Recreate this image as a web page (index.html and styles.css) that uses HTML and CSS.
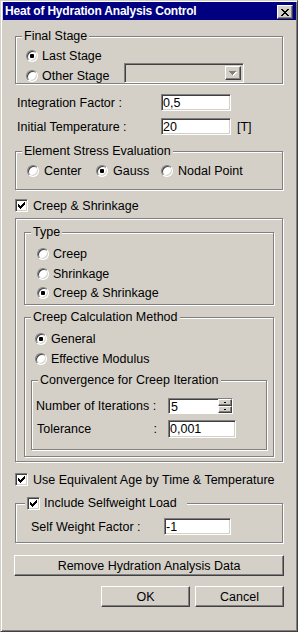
FILE: index.html
```html
<!doctype html>
<html lang="en">
 <head>
  <meta charset="UTF-8">
  <title>Heat of Hydration Analysis Control</title>
  <link rel="stylesheet" href="styles.css">
 </head>
 <body>

	<div id="dlg">
		<!-- 타이틀바 -->
		<div class="caption">
			<span class="cap_text">Heat of Hydration Analysis Control</span>
			<span class="cap_close">
				<svg width="8" height="7" viewBox="0 0 8 7"><path d="M0 0h2v1H0zM6 0h2v1H6zM1 1h2v1H1zM5 1h2v1H5zM2 2h4v1H2zM3 3h2v1H3zM2 4h4v1H2zM1 5h2v1H1zM5 5h2v1H5zM0 6h2v1H0zM6 6h2v1H6z"/></svg>
			</span>
		</div>

		<div class="client">

			<!-- Final Stage -->
			<fieldset class="grp f_final">
				<legend>Final Stage</legend>
				<div class="gb g_final">
					<div class="opt r_last"><span class="radio on"></span><span>Last Stage</span></div>
					<div class="r_other">
						<div class="opt o_other"><span class="radio"></span><span>Other Stage</span></div>
						<div class="combo">
							<span class="combo_btn">
								<svg width="8" height="5" viewBox="0 0 8 5"><path fill="#fff" d="M1 1h7v1H1zM2 2h5v1H2zM3 3h3v1H3zM4 4h1v1H4z"/><path fill="#808080" d="M0 0h7v1H0zM1 1h5v1H1zM2 2h3v1H2zM3 3h1v1H3z"/></svg>
							</span>
						</div>
					</div>
				</div>
			</fieldset>

			<!-- 입력값 -->
			<div class="field f_int">
				<span class="fld_lbl">Integration Factor :</span>
				<input class="edit" type="text" value="0,5">
			</div>
			<div class="field f_temp">
				<span class="fld_lbl">Initial Temperature :</span>
				<input class="edit" type="text" value="20">
				<span class="unit">[T]</span>
			</div>

			<!-- Element Stress Evaluation -->
			<fieldset class="grp f_stress">
				<legend>Element Stress Evaluation</legend>
				<div class="gb g_stress">
					<div class="opt o_center"><span class="radio"></span><span>Center</span></div>
					<div class="opt o_gauss"><span class="radio on"></span><span>Gauss</span></div>
					<div class="opt"><span class="radio"></span><span>Nodal Point</span></div>
				</div>
			</fieldset>

			<div class="opt chk_row c_creep">
				<span class="check"><svg width="7" height="7" viewBox="0 0 7 7"><path d="M0 2h1v3H0zM1 3h1v3H1zM2 4h1v3H2zM3 3h1v3H3zM4 2h1v3H4zM5 1h1v3H5zM6 0h1v3H6z"/></svg></span>
				<span>Creep &amp; Shrinkage</span>
			</div>

			<!-- Creep 박스 -->
			<div class="box">
				<fieldset class="grp">
					<legend>Type</legend>
					<div class="gb g_type">
						<div class="opt t1"><span class="radio"></span><span>Creep</span></div>
						<div class="opt t2"><span class="radio"></span><span>Shrinkage</span></div>
						<div class="opt t3"><span class="radio on"></span><span>Creep &amp; Shrinkage</span></div>
					</div>
				</fieldset>

				<fieldset class="grp f_calc">
					<legend>Creep Calculation Method</legend>
					<div class="gb g_calc">
						<div class="opt m1"><span class="radio on"></span><span>General</span></div>
						<div class="opt m2"><span class="radio"></span><span>Effective Modulus</span></div>

						<fieldset class="grp f_conv">
							<legend>Convergence for Creep Iteration</legend>
							<div class="gb g_conv">
								<div class="field f_iter">
									<span class="fld_lbl">Number of Iterations :</span>
									<div class="spin">
										<input class="spin_edit" type="text" value="5">
										<span class="spin_btns"><span class="sb"></span><span class="sb"></span></span>
									</div>
								</div>
								<div class="field f_tol">
									<span class="fld_lbl tol_lbl"><span>Tolerance</span><span>:</span></span>
									<input class="edit" type="text" value="0,001">
								</div>
							</div>
						</fieldset>
					</div>
				</fieldset>
			</div>

			<div class="opt chk_row c_age">
				<span class="check"><svg width="7" height="7" viewBox="0 0 7 7"><path d="M0 2h1v3H0zM1 3h1v3H1zM2 4h1v3H2zM3 3h1v3H3zM4 2h1v3H4zM5 1h1v3H5zM6 0h1v3H6z"/></svg></span>
				<span>Use Equivalent Age by Time &amp; Temperature</span>
			</div>

			<!-- Selfweight -->
			<fieldset class="grp f_self">
				<legend class="lg_check">
					<span class="check"><svg width="7" height="7" viewBox="0 0 7 7"><path d="M0 2h1v3H0zM1 3h1v3H1zM2 4h1v3H2zM3 3h1v3H3zM4 2h1v3H4zM5 1h1v3H5zM6 0h1v3H6z"/></svg></span>
					<span>Include Selfweight Load</span>
				</legend>
				<div class="gb g_self">
					<div class="field f_selfw">
						<span class="fld_lbl">Self Weight Factor :</span>
						<input class="edit" type="text" value="-1">
					</div>
				</div>
			</fieldset>

			<button class="btn b_remove" type="button">Remove Hydration Analysis Data</button>

			<div class="b_row">
				<button class="btn b_ok" type="button">OK</button>
				<button class="btn b_ok" type="button">Cancel</button>
			</div>
		</div>
	</div>

 </body>
</html>
```

FILE: styles.css
```css
/* 기본 */
* {
box-sizing: border-box;
}

html,body {
margin: 0;
background: #d4d0c8;
}

body {
font-family: "Liberation Sans", Arial, sans-serif;
font-size: 12.5px;
line-height: 14px;
color: #000;
}

/* 창 전체 */
#dlg {
width: 298px;
height: 632px;
padding: 1px;
background: #d4d0c8;
border: solid 1px;
border-color: #d4d0c8 #404040 #404040 #d4d0c8;
box-shadow: inset 1px 1px 0 #fff, inset -1px -1px 0 #808080;
}

/* 타이틀바 */
.caption {
height: 18px;
margin-left: 1px;
padding: 0 3px 0 2px;
display: flex;
align-items: center;
justify-content: space-between;
background: #000080;
color: #fff;
font-size: 12px;
font-weight: bold;
letter-spacing: -0.2px;
}

.cap_close {
width: 16px;
height: 14px;
margin-top: 2px;
display: flex;
align-items: center;
justify-content: center;
background: #d4d0c8;
border: solid 1px;
border-color: #fff #404040 #404040 #fff;
box-shadow: inset -1px -1px 0 #808080;
}

/* 본문 */
.client {
display: flex;
flex-direction: column;
padding: 0 13px;
}

/* 그룹박스 (안쪽 여백은 .gb 에서) */
.grp {
min-width: 0;
margin: 0;
padding: 0;
border: solid 1px #808080;
box-shadow: inset 1px 1px 0 #fff, 1px 1px 0 #fff;
}

.grp legend {
height: 13px;
line-height: 13px;
margin-left: 6px;
padding: 0 2px;
background: #d4d0c8;
}

.box {
margin-top: 6px;
padding: 7px 8px 4px 8px;
border: solid 1px #808080;
box-shadow: inset 1px 1px 0 #fff, 1px 1px 0 #fff;
}

/* 라디오, 체크 */
.opt {
height: 14px;
display: flex;
align-items: center;
gap: 4px;
white-space: nowrap;
}

.radio {
width: 12px;
height: 12px;
flex: none;
display: flex;
align-items: center;
justify-content: center;
border-radius: 50%;
background: #fff;
border: solid 1px;
border-color: #808080 #fff #fff #808080;
box-shadow: inset 1px 1px 0 #404040, inset -1px -1px 0 #d4d0c8;
}

.radio.on::after {
content: "";
width: 4px;
height: 4px;
border-radius: 1px;
background: #000;
}

.check {
width: 13px;
height: 13px;
flex: none;
display: flex;
align-items: center;
justify-content: center;
background: #fff;
border: solid 1px;
border-color: #808080 #fff #fff #808080;
box-shadow: inset 1px 1px 0 #404040, inset -1px -1px 0 #d4d0c8;
}

.chk_row {
height: 13px;
gap: 5px;
}

/* Final Stage */
.f_final {
margin-top: 10px;
}

.g_final {
padding-left: 10px;
}

.r_last {
margin-top: 6px;
}

.r_other {
height: 20px;
display: flex;
align-items: flex-end;
}

.o_other {
width: 98px;
}

.combo {
width: 120px;
height: 20px;
padding: 2px;
display: flex;
justify-content: flex-end;
background: #d4d0c8;
border: solid 1px;
border-color: #808080 #fff #fff #808080;
box-shadow: inset 1px 1px 0 #404040, inset -1px -1px 0 #d4d0c8;
}

.combo_btn {
width: 16px;
display: flex;
align-items: center;
justify-content: center;
border: solid 1px;
border-color: #fff #404040 #404040 #fff;
box-shadow: inset -1px -1px 0 #808080;
}

/* 입력칸 */
.field {
height: 17px;
display: flex;
align-items: center;
}

.fld_lbl {
flex: none;
white-space: nowrap;
}

.edit {
width: 70px;
height: 17px;
margin: 0;
padding: 0 1px;
font: inherit;
color: #000;
background: #fff;
outline: none;
border: solid 1px;
border-color: #808080 #fff #fff #808080;
box-shadow: inset 1px 1px 0 #404040, inset -1px -1px 0 #d4d0c8;
}

.f_int {
margin-top: 10px;
padding-left: 2px;
}

.f_temp {
margin-top: 7px;
padding-left: 2px;
}

.f_int .fld_lbl,.f_temp .fld_lbl {
width: 144px;
}

.unit {
margin-left: 6px;
}

/* Element Stress */
.f_stress {
margin-top: 10px;
}

.g_stress {
display: flex;
padding: 6px 0 11px 11px;
}

.g_stress .opt {
gap: 5px;
}

.o_center {
width: 69px;
}

.o_gauss {
width: 65px;
}

.c_creep {
margin-top: 9px;
}

/* Type */
.g_type {
padding: 0 0 4px 12px;
}

.t1 {
margin-top: 8px;
}

.t2 {
margin-top: 6px;
}

.t3 {
margin-top: 5px;
}

/* Creep Calculation */
.f_calc {
margin-top: 6px;
}

.g_calc {
padding: 0 6px 6px 6px;
}

.m1 {
margin-top: 8px;
margin-left: 4px;
}

.m2 {
margin-top: 6px;
margin-left: 4px;
}

.f_conv {
margin-top: 8px;
}

.g_conv {
padding: 0 0 11px 4px;
}

.f_iter {
margin-top: 11px;
height: 16px;
}

.f_iter .fld_lbl,.tol_lbl {
width: 132px;
}

.tol_lbl {
display: flex;
justify-content: space-between;
padding: 0 11px 0 1px;
}

.f_tol {
margin-top: 6px;
height: 18px;
}

.f_tol .edit {
width: 68px;
height: 18px;
}

.spin {
width: 65px;
height: 16px;
display: flex;
background: #fff;
border: solid 1px;
border-color: #808080 #fff #fff #808080;
box-shadow: inset 1px 1px 0 #404040;
}

.spin_edit {
flex: 1;
min-width: 0;
margin: 1px 0 0 1px;
padding: 0 1px;
border: 0;
outline: none;
font: inherit;
background: #fff;
}

.spin_btns {
width: 14px;
display: flex;
flex-direction: column;
}

.sb {
flex: 1;
display: flex;
align-items: center;
justify-content: center;
background: #d4d0c8;
border: solid 1px;
border-color: #fff #404040 #404040 #fff;
box-shadow: inset -1px -1px 0 #808080;
}

.sb::after {
content: "";
width: 2px;
height: 1px;
background: #000;
}

/* Equivalent Age, Selfweight */
.c_age {
margin-top: 11px;
}

.f_self {
margin-top: 11px;
}

.grp .lg_check {
display: flex;
align-items: center;
gap: 4px;
margin-left: 9px;
padding: 0 10px 0 2px;
}

.g_self {
padding: 0 0 7px 15px;
}

.f_selfw {
margin-top: 8px;
}

.f_selfw .fld_lbl {
width: 133px;
}

.f_selfw .edit {
width: 67px;
}

/* 버튼 */
.btn {
height: 21px;
padding: 0;
font: inherit;
color: #000;
display: flex;
align-items: center;
justify-content: center;
background: #d4d0c8;
border: solid 1px;
border-color: #fff #404040 #404040 #fff;
box-shadow: inset -1px -1px 0 #808080;
}

.b_remove {
margin: 12px -1px 0 -1px;
}

.b_row {
margin: 10px -1px 0 0;
display: flex;
justify-content: flex-end;
gap: 5px;
}

.b_ok {
width: 89px;
}
```
